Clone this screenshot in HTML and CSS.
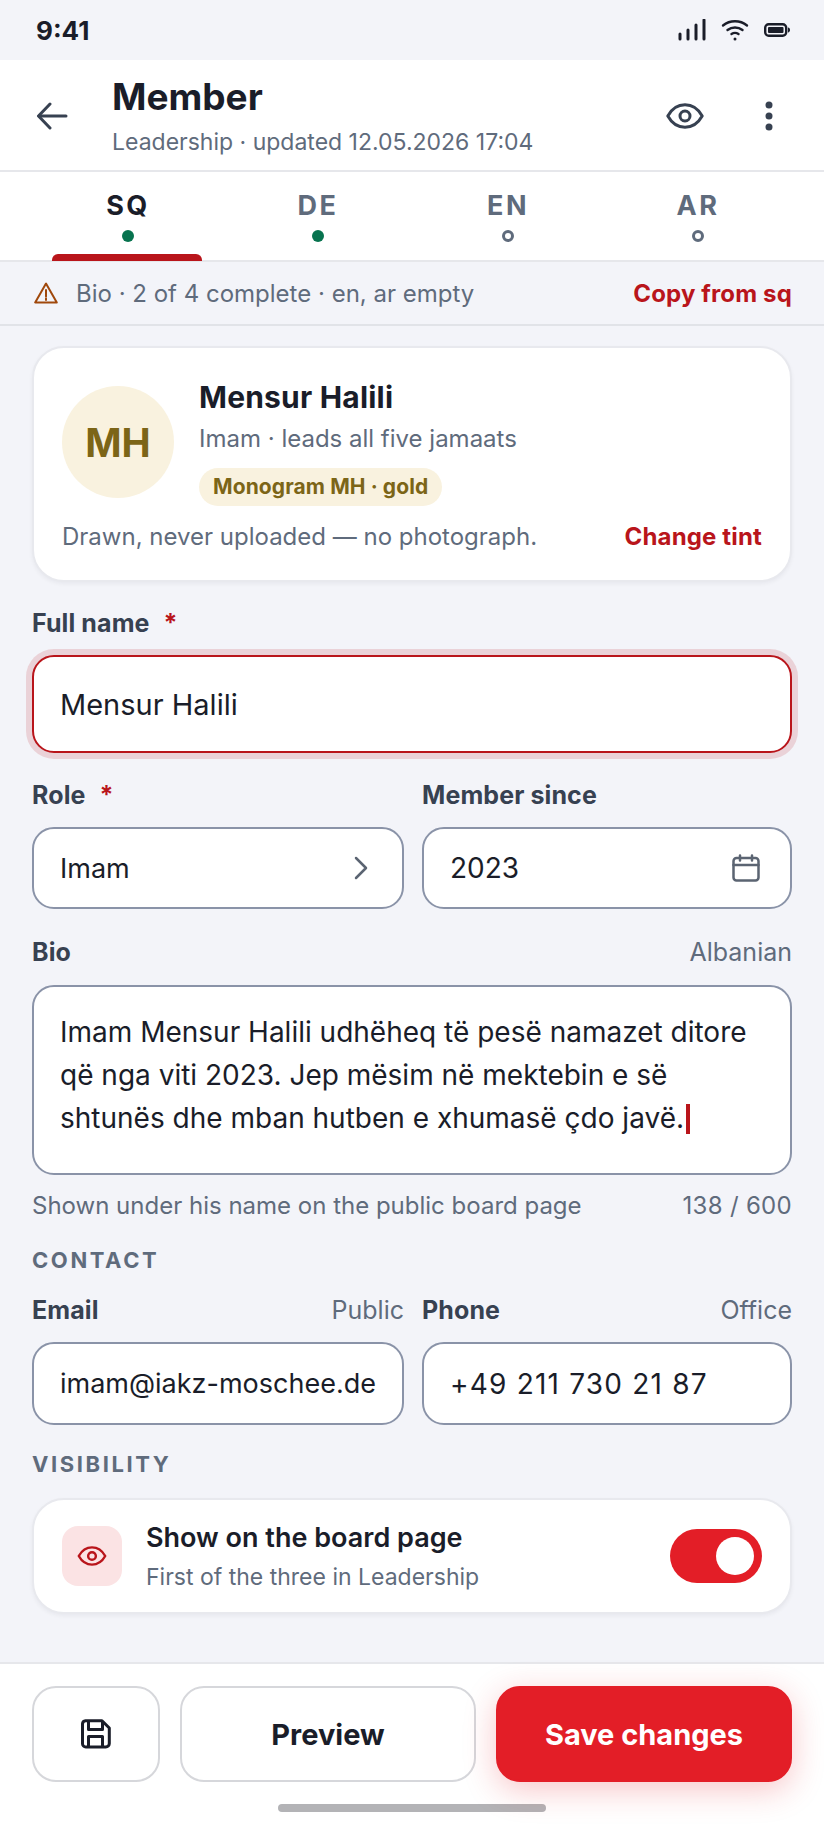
FILE: index.html
```html
<!DOCTYPE html>
<html lang="en">
<head>
    <meta charset="UTF-8">
    <meta name="viewport" content="width=device-width, initial-scale=1.0">
    <title>Member</title>
    <link rel="stylesheet" href="styles.css">
</head>
<body>

    <div class="status-bar">
        <span class="status-time">9:41</span>
        <div class="status-icons">
            <svg width="28" height="22" viewBox="0 0 28 22" fill="none" stroke="#1a1d29" stroke-width="3" stroke-linecap="round"><path d="M2 15v5M10 11v9M18 6v14M26 1v19"/></svg>
            <svg width="28" height="22" viewBox="0 0 28 22" fill="none" stroke="#1a1d29" stroke-width="2.4" stroke-linecap="round"><path d="M2 6.5c7-5.600 17-5.600 24 0"/><path d="M6.500 11c4.500-3.400 10.500-3.400 15 0"/><path d="M10.500 15c2-1.300 5-1.300 7 0"/><path d="M14 20h.01" stroke-width="3"/></svg>
            <svg width="26" height="14" viewBox="0 0 26 14" fill="none"><rect x="1.200" y="1.200" width="21" height="11.600" rx="3.500" stroke="#1a1d29" stroke-width="2.400"/><rect x="4" y="4" width="15.500" height="6" rx="1" fill="#1a1d29"/><path d="M24 4.500c1.300.3 2 1.200 2 2.500s-.7 2.200-2 2.500z" fill="#1a1d29"/></svg>
        </div>
    </div>

    <header class="top-bar">
        <button class="icon-btn back-btn" aria-label="Back">
            <svg width="32" height="28" viewBox="0 0 32 28" fill="none" stroke="#374151" stroke-width="3" stroke-linecap="round" stroke-linejoin="round"><path d="M30 14H3"/><path d="M14 2 2.500 14 14 26"/></svg>
        </button>
        <div class="top-titles">
            <h1>Member</h1>
            <p>Leadership · updated 12.05.2026 17:04</p>
        </div>
        <button class="icon-btn eye-btn" aria-label="Preview">
            <svg width="38" height="26" viewBox="0 0 38 26" fill="none" stroke="#374151" stroke-width="3" stroke-linejoin="round"><path d="M1.800 13C6 5.500 12 1.800 19 1.800S32 5.500 36.200 13C32 20.500 26 24.200 19 24.200S6 20.500 1.800 13Z"/><circle cx="19" cy="13" r="5"/></svg>
        </button>
        <button class="icon-btn more-btn" aria-label="More">
            <svg width="10" height="32" viewBox="0 0 10 32" fill="#374151"><circle cx="5" cy="5" r="3.500"/><circle cx="5" cy="16" r="3.500"/><circle cx="5" cy="27" r="3.500"/></svg>
        </button>
    </header>

    <nav class="tabs">
        <div class="tab active">SQ<span class="dot done"></span></div>
        <div class="tab">DE<span class="dot done"></span></div>
        <div class="tab">EN<span class="dot empty"></span></div>
        <div class="tab">AR<span class="dot empty"></span></div>
    </nav>

    <div class="notice">
        <svg width="24" height="22" viewBox="0 0 24 22" fill="none" stroke="#a0480c" stroke-width="2" stroke-linejoin="round"><path d="M12 1.500 1.200 20.500h21.600Z"/><path d="M12 8v6.500M12 16.500v1.600" stroke-linecap="round"/></svg>
        <span class="notice-text">Bio · 2 of 4 complete · en, ar empty</span>
        <a class="link">Copy from sq</a>
    </div>

    <main class="form">
        <section class="card monogram-card">
            <div class="monogram-row">
                <div class="avatar">MH</div>
                <div class="monogram-info">
                    <div class="person-name">Mensur Halili</div>
                    <div class="person-role">Imam · leads all five jamaats</div>
                    <span class="pill">Monogram MH · gold</span>
                </div>
            </div>
            <div class="monogram-foot">
                <span>Drawn, never uploaded — no photograph.</span>
                <a class="link">Change tint</a>
            </div>
        </section>

        <div class="field name-field">
            <div class="label-row"><label>Full name<span class="req">*</span></label></div>
            <div class="input focus">Mensur Halili</div>
        </div>

        <div class="two-col role-row">
            <div class="field">
                <div class="label-row"><label>Role<span class="req">*</span></label></div>
                <div class="input">
                    <span>Imam</span>
                    <svg class="chevron" width="16" height="24" viewBox="0 0 16 24" fill="none" stroke="#5b6472" stroke-width="2.500" stroke-linecap="round" stroke-linejoin="round"><path d="M3 2l10 10L3 22"/></svg>
                </div>
            </div>
            <div class="field">
                <div class="label-row"><label>Member since</label></div>
                <div class="input">
                    <span class="year">2023</span>
                    <svg class="calendar" width="28" height="28" viewBox="0 0 28 28" fill="none" stroke="#5b6472" stroke-width="2.500" stroke-linecap="round"><rect x="1.500" y="4" width="25" height="22.500" rx="3"/><path d="M1.500 11h25M8 1.500v5M20 1.500v5"/></svg>
                </div>
            </div>
        </div>

        <div class="field bio-field">
            <div class="label-row"><label>Bio</label><span class="aside">Albanian</span></div>
            <div class="input textarea">Imam Mensur Halili udhëheq të pesë namazet ditore që nga viti 2023. Jep mësim në mektebin e së shtunës dhe mban hutben e xhumasë çdo javë.<span class="caret"></span></div>
            <div class="hint-row">
                <span>Shown under his name on the public board page</span>
                <span class="count">138 / 600</span>
            </div>
        </div>

        <h2 class="section-title contact-title">CONTACT</h2>
        <div class="two-col">
            <div class="field">
                <div class="label-row"><label>Email</label><span class="aside">Public</span></div>
                <div class="input">imam@iakz-moschee.de</div>
            </div>
            <div class="field">
                <div class="label-row"><label>Phone</label><span class="aside">Office</span></div>
                <div class="input phone">+49 211 730 21 87</div>
            </div>
        </div>

        <h2 class="section-title visibility-title">VISIBILITY</h2>
        <section class="card visibility-card">
            <div class="vis-icon">
                <svg width="30" height="20" viewBox="0 0 38 26" fill="none" stroke="#b9151b" stroke-width="3.200" stroke-linejoin="round"><path d="M1.800 13C6 5.500 12 1.800 19 1.800S32 5.500 36.200 13C32 20.500 26 24.200 19 24.200S6 20.500 1.800 13Z"/><circle cx="19" cy="13" r="5"/></svg>
            </div>
            <div class="vis-text">
                <div class="vis-title">Show on the board page</div>
                <div class="vis-sub">First of the three in Leadership</div>
            </div>
            <div class="toggle"><span class="knob"></span></div>
        </section>
    </main>

    <footer class="action-bar">
        <div class="actions">
            <button class="btn btn-icon" aria-label="Save draft">
                <svg width="30" height="30" viewBox="0 0 30 30" fill="none" stroke="#1a1d29" stroke-width="3" stroke-linejoin="round"><path d="M4.500 1.700h16.500l7.300 7.300v15.500a3.500 3.500 0 0 1-3.500 3.500H4.800a3.300 3.300 0 0 1-3.300-3.300V4.800a3.300 3.300 0 0 1 3-3.100Z"/><path d="M7.500 2v8.500h14V2M7.500 28V17.500h14V28"/></svg>
            </button>
            <button class="btn btn-outline">Preview</button>
            <button class="btn btn-primary">Save changes</button>
        </div>
        <div class="home-bar"></div>
    </footer>

</body>
</html>
```

FILE: styles.css
```css
* {
    box-sizing: border-box;
}

body {
    display: flex;
    flex-direction: column;
    width: 824px;
    height: 1830px;
    margin: 0;
    overflow: hidden;
    background-color: #f3f4f9;
    color: #1a1d29;
    font-family: Inter, "Liberation Sans", sans-serif;
}

button {
    font-family: inherit;
    cursor: pointer;
}

h1, h2, p {
    margin: 0;
}

.status-bar {
    display: flex;
    justify-content: space-between;
    align-items: center;
    height: 60px;
    padding: 0 34px 0 36px;
}

.status-time {
    font-size: 26px;
    font-weight: 700;
}

.status-icons {
    display: flex;
    align-items: center;
    gap: 15px;
}

.top-bar {
    display: flex;
    align-items: center;
    height: 112px;
    padding: 2px 32px 0 36px;
    background-color: #fff;
    border-bottom: 2px solid #e6e7eb;
}

.icon-btn {
    display: flex;
    padding: 0;
    border: 0;
    background: none;
}

.back-btn {
    margin-right: 44px;
}

.top-titles {
    flex: 1;
}

.top-titles h1 {
    font-size: 37px;
    font-weight: 700;
    line-height: 44px;
}

.top-titles p {
    margin-top: 8px;
    color: #5f6b7c;
    font-size: 23px;
    line-height: 30px;
}

.eye-btn {
    margin-right: 60px;
}

.more-btn {
    margin-right: 18px;
}

.tabs {
    display: grid;
    grid-template-columns: repeat(4, 1fr);
    height: 90px;
    padding: 0 31px 0 33px;
    background-color: #fff;
    border-bottom: 2px solid #e6e7eb;
}

.tab {
    position: relative;
    display: flex;
    flex-direction: column;
    align-items: center;
    padding-top: 18px;
    color: #5f6b7c;
    font-size: 27px;
    font-weight: 700;
    line-height: 32px;
    letter-spacing: 2.500px;
}

.tab.active {
    color: #1a1d29;
}

.tab.active::after {
    content: "";
    position: absolute;
    left: 19px;
    right: 21px;
    bottom: -1px;
    height: 7px;
    border-radius: 6px 6px 0 0;
    background-color: #b9151b;
}

.dot {
    width: 12px;
    height: 12px;
    margin-top: 8px;
    border-radius: 50%;
}

.dot.done {
    background-color: #08734f;
}

.dot.empty {
    border: 3px solid #5f6b7c;
}

.notice {
    display: flex;
    align-items: center;
    height: 64px;
    padding: 0 32px 0 34px;
    border-bottom: 2px solid #e1e3e8;
    color: #5f6b7c;
    font-size: 24px;
}

.notice-text {
    flex: 1;
    margin-left: 18px;
}

.link {
    color: #b9151b;
    font-size: 24px;
    font-weight: 700;
    letter-spacing: 0.150px;
}

.form {
    flex: 1;
    padding: 20px 32px 0;
}

.card {
    border: 2px solid #e8e9ee;
    border-radius: 32px;
    background-color: #fff;
    box-shadow: 0 2px 4px rgba(26, 29, 41, 0.05);
}

.monogram-card {
    height: 236px;
    padding: 38px 28px 0;
}

.monogram-row {
    display: flex;
    gap: 25px;
}

.avatar {
    display: flex;
    flex: none;
    justify-content: center;
    align-items: center;
    width: 112px;
    height: 112px;
    border-radius: 50%;
    background-color: #f9f2df;
    color: #7c6517;
    font-size: 39px;
    font-weight: 700;
}

.person-name {
    margin-top: -7px;
    font-size: 30px;
    font-weight: 700;
    line-height: 36px;
    letter-spacing: 0.200px;
}

.person-role {
    margin-top: 9px;
    color: #5f6b7c;
    font-size: 24px;
    line-height: 30px;
}

.pill {
    display: inline-block;
    margin-top: 14px;
    padding: 0 14px;
    border-radius: 19px;
    background-color: #f9f2df;
    color: #7c6517;
    font-size: 21px;
    font-weight: 700;
    line-height: 38px;
    letter-spacing: 0.100px;
}

.monogram-foot {
    display: flex;
    justify-content: space-between;
    margin-top: 16px;
    color: #5f6b7c;
    font-size: 24px;
}

.field {
    display: flex;
    flex-direction: column;
    min-width: 0;
}

.name-field {
    margin-top: 24px;
}

.label-row {
    display: flex;
    justify-content: space-between;
    align-items: center;
    height: 34px;
    margin-bottom: 15px;
}

.label-row label {
    color: #374151;
    font-size: 25px;
    font-weight: 700;
    letter-spacing: 0.100px;
}

.req {
    margin-left: 14px;
    color: #b9151b;
}

.aside {
    color: #5f6b7c;
    font-size: 25px;
}

.input {
    display: flex;
    justify-content: space-between;
    align-items: center;
    height: 83px;
    padding: 0 26px;
    border: 2px solid #8a93a8;
    border-radius: 22px;
    background-color: #fff;
    font-size: 27px;
    white-space: nowrap;
}

.input.focus {
    height: 98px;
    border-color: #b9151b;
    font-size: 29px;
    box-shadow: 0 0 0 6px rgba(185, 21, 27, 0.15);
}

.input.phone {
    font-size: 28px;
    letter-spacing: 1.200px;
}

.year {
    font-size: 28px;
}

.chevron {
    margin-right: 7px;
}

.calendar {
    margin-right: 4px;
}

.two-col {
    display: grid;
    grid-template-columns: 372px 1fr;
    gap: 18px;
}

.role-row {
    margin-top: 25px;
}

.role-row .input {
    height: 82px;
}

.bio-field {
    margin-top: 26px;
}

.bio-field .label-row {
    margin-bottom: 16px;
}

.input.textarea {
    display: block;
    height: 190px;
    padding: 24px 26px 0;
    font-size: 28px;
    line-height: 43px;
    white-space: normal;
}

.caret {
    display: inline-block;
    width: 4px;
    height: 30px;
    margin-left: 2px;
    background-color: #b9151b;
    vertical-align: -6px;
}

.hint-row {
    display: flex;
    justify-content: space-between;
    margin-top: 16px;
    color: #5f6b7c;
    font-size: 24px;
}

.count {
    letter-spacing: 0.300px;
}

.section-title {
    color: #5f6b7c;
    font-size: 22px;
    font-weight: 700;
    line-height: 26px;
    letter-spacing: 2.600px;
}

.contact-title {
    margin-top: 27px;
    margin-bottom: 20px;
}

.visibility-title {
    margin-top: 26px;
    margin-bottom: 21px;
}

.visibility-card {
    display: flex;
    align-items: center;
    height: 116px;
    padding: 0 28px;
}

.vis-icon {
    display: flex;
    flex: none;
    justify-content: center;
    align-items: center;
    width: 60px;
    height: 60px;
    border-radius: 16px;
    background-color: #fbe3e4;
}

.vis-text {
    flex: 1;
    margin-left: 24px;
}

.vis-title {
    font-size: 27px;
    font-weight: 600;
    line-height: 34px;
}

.vis-sub {
    margin-top: 8px;
    color: #5f6b7c;
    font-size: 23px;
    line-height: 28px;
}

.toggle {
    display: flex;
    justify-content: flex-end;
    align-items: center;
    width: 92px;
    height: 54px;
    padding: 0 8px;
    border-radius: 27px;
    background-color: #e31e27;
}

.knob {
    width: 38px;
    height: 38px;
    border-radius: 50%;
    background-color: #fff;
}

.action-bar {
    height: 168px;
    padding: 22px 32px 0;
    background-color: #fff;
    border-top: 2px solid #e6e7eb;
}

.actions {
    display: flex;
    gap: 20px;
}

.btn {
    height: 96px;
    padding: 0;
    border-radius: 24px;
    font-size: 29px;
    font-weight: 700;
}

.btn-icon {
    display: flex;
    flex: none;
    justify-content: center;
    align-items: center;
    width: 128px;
    border: 2px solid #d6d7db;
    background-color: #fff;
}

.btn-outline {
    flex: 1;
    border: 2px solid #d6d7db;
    background-color: #fff;
    color: #1a1d29;
}

.btn-primary {
    flex: 1;
    border: 2px solid #e31e27;
    background-color: #e31e27;
    color: #fff;
    box-shadow: 0 8px 32px rgba(227, 30, 39, 0.25);
}

.home-bar {
    width: 268px;
    height: 8px;
    margin: 22px auto 0;
    border-radius: 4px;
    background-color: #b3b3b6;
}
```
